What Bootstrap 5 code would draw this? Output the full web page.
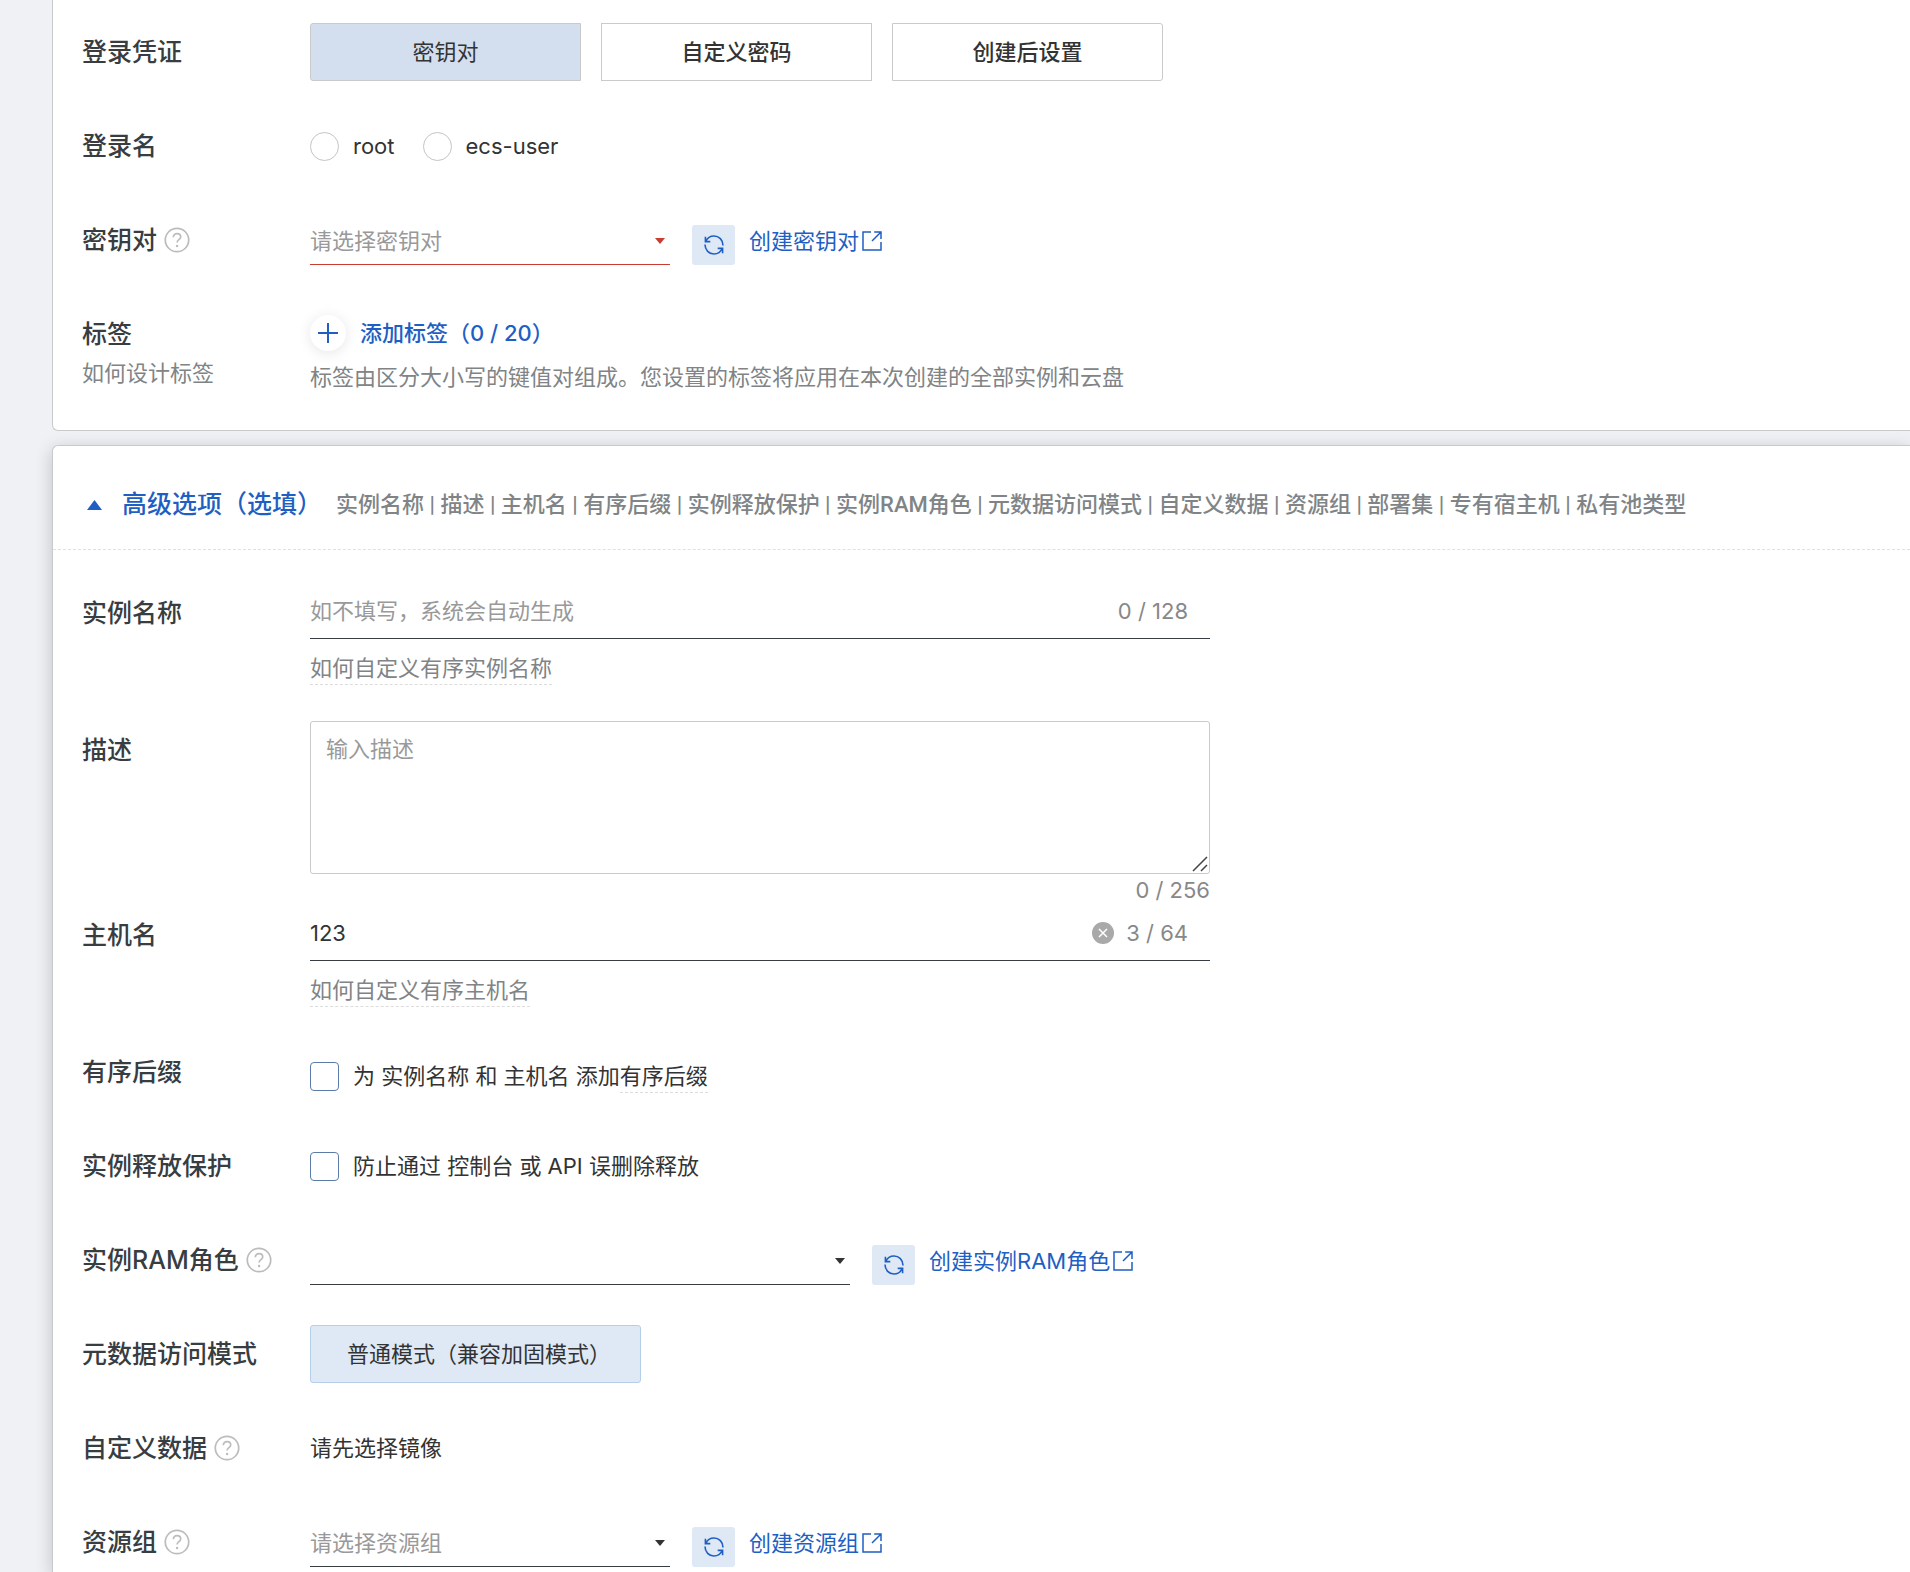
<!DOCTYPE html>
<html lang="zh-CN">
<head>
<meta charset="utf-8">
<meta name="viewport" content="width=device-width, initial-scale=1">
<title>创建实例</title>
<link href="https://cdn.jsdelivr.net/npm/bootstrap@5.3.0/dist/css/bootstrap.min.css" rel="stylesheet">
<style>
  :root { --ink: #333; --label: #373d41; --hint: #808486; --ph: #999; --blue: #1f5fc4; --tint: #dfe9f6; --line: #c9cacc; }
  body { background: #eff1f5; color: var(--ink); font-family: Inter, "Noto Sans CJK SC", sans-serif; font-size: 22px; line-height: 32px; padding-left: 52px; }
  .panel { background: #fff; border: 1px solid var(--line); border-right: 0; padding: 0 30px 0 29px; }
  .panel-top { border-top: 0; border-bottom-left-radius: 6px; padding-top: 23px; padding-bottom: 37px; }
  .panel-more { border-bottom: 0; border-top-left-radius: 6px; margin-top: 14px; box-shadow: 0 4px 18px rgba(0, 0, 0, .2); }
  .form-line { display: flex; margin-bottom: 36px; }
  .form-line:last-child { margin-bottom: 0; }
  .side { flex: 0 0 228px; }
  .side-title { display: flex; align-items: center; gap: 7px; height: 58px; font-size: 25px; font-weight: 500; color: var(--label); white-space: nowrap; }
  .side-hint { display: block; line-height: 20px; }
  .hint, .hint:hover { color: var(--hint); text-decoration: none; }
  .field { flex: 0 1 900px; min-width: 0; min-height: 58px; }
  .choices { display: flex; gap: 20px; }
  .choice { flex: 0 1 271px; height: 58px; border: 1px solid var(--line); border-radius: 0; background: #fff; font-size: 22px; font-weight: 500; color: var(--ink); padding: 0; }
  .choice:first-child { border-radius: 3px 0 0 3px; }
  .choice:last-child { border-radius: 0 3px 3px 0; }
  .choice.active, .choice.active:hover { background: #d3deee; border-color: var(--line); color: var(--ink); font-weight: 400; }
  .mode { height: 58px; width: 331px; background: var(--tint); border: 1px solid #b5cfe9; border-radius: 3px; font-size: 22px; color: var(--ink); text-align: left; padding: 0 0 0 36px; }
  .tick { display: flex; align-items: center; gap: 14px; height: 58px; }
  .tick .form-check-input { width: 29px; height: 29px; margin: 0; flex: none; border-color: #5b7ca8; background-color: #fff; }
  .tick .form-check-input[type=checkbox] { border-radius: 4px; }
  .tick .form-check-input[type=radio] { border-color: #c4c4c4; }
  .tick-low { padding-top: 8px; }
  .dash { border-bottom: 1px dashed #dcdcdc; line-height: 31px; display: inline-block; text-decoration: none; }
  .pick { height: 54px; display: flex; align-items: flex-end; }
  .pick-box { position: relative; flex: 0 1 360px; }
  .pick-wide { flex-basis: 540px; }
  .pick-box .form-select { height: 48px; padding: 0 30px 0 0; border: 0; border-bottom: 1px solid var(--label); border-radius: 0; background: none; font-size: 22px; line-height: 32px; color: var(--ph); }
  .pick-box svg { position: absolute; right: 5px; top: 21px; fill: #333; pointer-events: none; }
  .pick-box.invalid .form-select { border-color: #c93c30; }
  .pick-box.invalid svg { fill: #c93c30; }
  .sync { width: 43px; height: 40px; margin: 0 14px 0 22px; padding: 0; background: var(--tint); border: 0; border-radius: 3px; display: flex; align-items: center; justify-content: center; flex: none; }
  .out { color: var(--blue); text-decoration: none; display: flex; align-items: center; gap: 3px; height: 48px; white-space: nowrap; }
  .add { color: var(--blue); font-size: 22px; font-weight: 500; height: 56px; padding: 0; border: 0; display: flex; align-items: center; gap: 14px; }
  .add-dot { width: 36px; height: 36px; border-radius: 50%; background: #fff; box-shadow: 0 2px 14px rgba(0, 0, 0, .1); display: flex; align-items: center; justify-content: center; }
  .more-head { margin: 0 -30px 34px -29px; padding: 30px 30px 15px 34px; border-bottom: 1px dashed #e0e0e0; display: flex; align-items: center; }
  .more-btn { display: flex; align-items: center; gap: 20px; height: 58px; padding: 0; border: 0; font-size: 25px; font-weight: 500; color: var(--blue); white-space: nowrap; }
  .more-list { color: var(--hint); font-family: Roboto, "Noto Sans CJK SC", sans-serif; font-weight: 500; margin-left: 14px; white-space: nowrap; }
  .under { height: 55px; border-bottom: 1px solid var(--label); display: flex; align-items: center; padding-right: 22px; margin-bottom: 13px; color: #888; }
  .under .form-control { border: 0; border-radius: 0; padding: 0; background: none; font-size: 22px; line-height: 32px; color: var(--ink); }
  .form-control::placeholder { color: var(--ph); }
  .wipe { border: 0; padding: 0; background: none; display: flex; margin-right: 12px; }
  .memo { position: relative; }
  .memo .form-control { height: 153px; padding: 11px 15px; border: 1px solid var(--line); border-radius: 3px; font-size: 22px; line-height: 32px; resize: vertical; }
  .memo .form-control::-webkit-resizer { display: none; }
  .memo svg { position: absolute; right: 2px; bottom: 2px; pointer-events: none; }
  .memo-count { line-height: 32px; color: #888; text-align: right; }
</style>
</head>
<body class="min-vh-100 d-flex flex-column overflow-hidden">

<svg width="0" height="0" class="position-absolute" aria-hidden="true">
  <symbol id="i-help" viewBox="0 0 26 26"><circle cx="13" cy="13" r="11.7" fill="none" stroke="#bcbcbc" stroke-width="1.7"/><path d="M9.3 10.2c0-2.2 1.6-3.6 3.7-3.6s3.7 1.3 3.7 3.3c0 2.8-3.6 2.8-3.6 5.6" fill="none" stroke="#bcbcbc" stroke-width="1.7"/><circle cx="13.1" cy="19" r="1.2" fill="#bcbcbc"/></symbol>
  <symbol id="i-sync" viewBox="0 0 20 20"><g fill="none" stroke="#1f5fc4" stroke-width="1.6"><path d="M1.4 1.8v4.8h4.9M1.8 6.5C3.3 3 6.300 1 10 1c5 0 9 4 9 9.400"/><path d="M18.600 18.200v-4.800h-4.900M18.200 13.500C16.700 17 13.700 19 10 19c-5 0-9-4-9-9.400"/></g></symbol>
  <symbol id="i-out" viewBox="0 0 20 20"><path d="M9 1H1v18h18v-8M12.200 1H19v7M19 1l-9 9" fill="none" stroke="#1f5fc4" stroke-width="1.5"/></symbol>
  <symbol id="i-caret" viewBox="0 0 10 6"><path d="M0 0h10L5 6z"/></symbol>
</svg>

<section class="panel panel-top position-relative z-1">
  <div class="form-line">
    <div class="side"><span class="side-title">登录凭证</span></div>
    <div class="field choices" role="group" aria-label="登录凭证">
      <button type="button" class="btn choice active">密钥对</button>
      <button type="button" class="btn choice">自定义密码</button>
      <button type="button" class="btn choice">创建后设置</button>
    </div>
  </div>
  <div class="form-line">
    <div class="side"><span class="side-title">登录名</span></div>
    <div class="field d-flex gap-4">
      <div class="tick"><input class="form-check-input" type="radio" name="login" id="login-root"><label for="login-root">root</label></div>
      <div class="tick ms-1"><input class="form-check-input" type="radio" name="login" id="login-ecs"><label for="login-ecs">ecs-user</label></div>
    </div>
  </div>
  <div class="form-line">
    <div class="side"><label class="side-title" for="keypair">密钥对<svg width="26" height="26"><use href="#i-help"/></svg></label></div>
    <div class="field">
      <div class="pick">
        <div class="pick-box invalid"><select class="form-select" id="keypair"><option>请选择密钥对</option></select><svg width="10" height="6"><use href="#i-caret"/></svg></div>
        <button type="button" class="btn sync" aria-label="刷新"><svg width="20" height="20"><use href="#i-sync"/></svg></button>
        <a class="out" href="#">创建密钥对<svg width="20" height="20"><use href="#i-out"/></svg></a>
      </div>
    </div>
  </div>
  <div class="form-line">
    <div class="side"><span class="side-title">标签</span><a class="side-hint hint" href="#">如何设计标签</a></div>
    <div class="field">
      <button type="button" class="btn add"><span class="add-dot"><svg width="20" height="20"><path d="M10 0v20M0 10h20" stroke="#1f5fc4" stroke-width="2"/></svg></span>添加标签（0 / 20）</button>
      <div class="hint">标签由区分大小写的键值对组成。您设置的标签将应用在本次创建的全部实例和云盘</div>
    </div>
  </div>
</section>

<section class="panel panel-more flex-grow-1">
  <div class="more-head">
    <button type="button" class="btn more-btn" aria-expanded="true"><svg width="15" height="10"><path d="M0 10h15L7.500 0z" fill="#1f5fc4"/></svg>高级选项（选填）</button>
    <div class="more-list">实例名称 | 描述 | 主机名 | 有序后缀 | 实例释放保护 | 实例RAM角色 | 元数据访问模式 | 自定义数据 | 资源组 | 部署集 | 专有宿主机 | 私有池类型</div>
  </div>
  <div class="form-line">
    <div class="side"><label class="side-title" for="inst">实例名称</label></div>
    <div class="field">
      <div class="under"><input class="form-control" id="inst" type="text" placeholder="如不填写，系统会自动生成"><span class="text-nowrap">0 / 128</span></div>
      <a class="dash hint" href="#">如何自定义有序实例名称</a>
    </div>
  </div>
  <div class="form-line mb-0">
    <div class="side"><label class="side-title" for="memo">描述</label></div>
    <div class="field">
      <div class="memo"><textarea class="form-control" id="memo" placeholder="输入描述"></textarea><svg width="16" height="16"><path d="M1 15L15 1M9 15l6-6" stroke="#444" stroke-width="1.500"/></svg></div>
      <div class="memo-count">0 / 256</div>
    </div>
  </div>
  <div class="form-line">
    <div class="side"><label class="side-title" for="host">主机名</label></div>
    <div class="field">
      <div class="under"><input class="form-control" id="host" type="text" value="123"><button type="button" class="wipe" aria-label="清除"><svg width="22" height="22"><circle cx="11" cy="11" r="11" fill="#a9a9a9"/><path d="M7 7l8 8M15 7l-8 8" stroke="#fff" stroke-width="1.500"/></svg></button><span class="text-nowrap">3 / 64</span></div>
      <a class="dash hint" href="#">如何自定义有序主机名</a>
    </div>
  </div>
  <div class="form-line">
    <div class="side"><span class="side-title">有序后缀</span></div>
    <div class="field">
      <div class="tick tick-low"><input class="form-check-input" type="checkbox" id="suffix"><label for="suffix">为 实例名称 和 主机名 添加<span class="dash">有序后缀</span></label></div>
    </div>
  </div>
  <div class="form-line">
    <div class="side"><span class="side-title">实例释放保护</span></div>
    <div class="field">
      <div class="tick"><input class="form-check-input" type="checkbox" id="protect"><label for="protect">防止通过 控制台 或 API 误删除释放</label></div>
    </div>
  </div>
  <div class="form-line">
    <div class="side"><label class="side-title" for="ram">实例RAM角色<svg width="26" height="26"><use href="#i-help"/></svg></label></div>
    <div class="field">
      <div class="pick">
        <div class="pick-box pick-wide"><select class="form-select" id="ram"><option></option></select><svg width="10" height="6"><use href="#i-caret"/></svg></div>
        <button type="button" class="btn sync" aria-label="刷新"><svg width="20" height="20"><use href="#i-sync"/></svg></button>
        <a class="out" href="#">创建实例RAM角色<svg width="20" height="20"><use href="#i-out"/></svg></a>
      </div>
    </div>
  </div>
  <div class="form-line">
    <div class="side"><span class="side-title">元数据访问模式</span></div>
    <div class="field"><button type="button" class="btn mode">普通模式（兼容加固模式）</button></div>
  </div>
  <div class="form-line">
    <div class="side"><span class="side-title">自定义数据<svg width="26" height="26"><use href="#i-help"/></svg></span></div>
    <div class="field d-flex align-items-center">请先选择镜像</div>
  </div>
  <div class="form-line">
    <div class="side"><label class="side-title" for="group">资源组<svg width="26" height="26"><use href="#i-help"/></svg></label></div>
    <div class="field">
      <div class="pick">
        <div class="pick-box"><select class="form-select" id="group"><option>请选择资源组</option></select><svg width="10" height="6"><use href="#i-caret"/></svg></div>
        <button type="button" class="btn sync" aria-label="刷新"><svg width="20" height="20"><use href="#i-sync"/></svg></button>
        <a class="out" href="#">创建资源组<svg width="20" height="20"><use href="#i-out"/></svg></a>
      </div>
    </div>
  </div>
</section>

<script src="https://cdn.jsdelivr.net/npm/bootstrap@5.3.0/dist/js/bootstrap.bundle.min.js"></script>
</body>
</html>
